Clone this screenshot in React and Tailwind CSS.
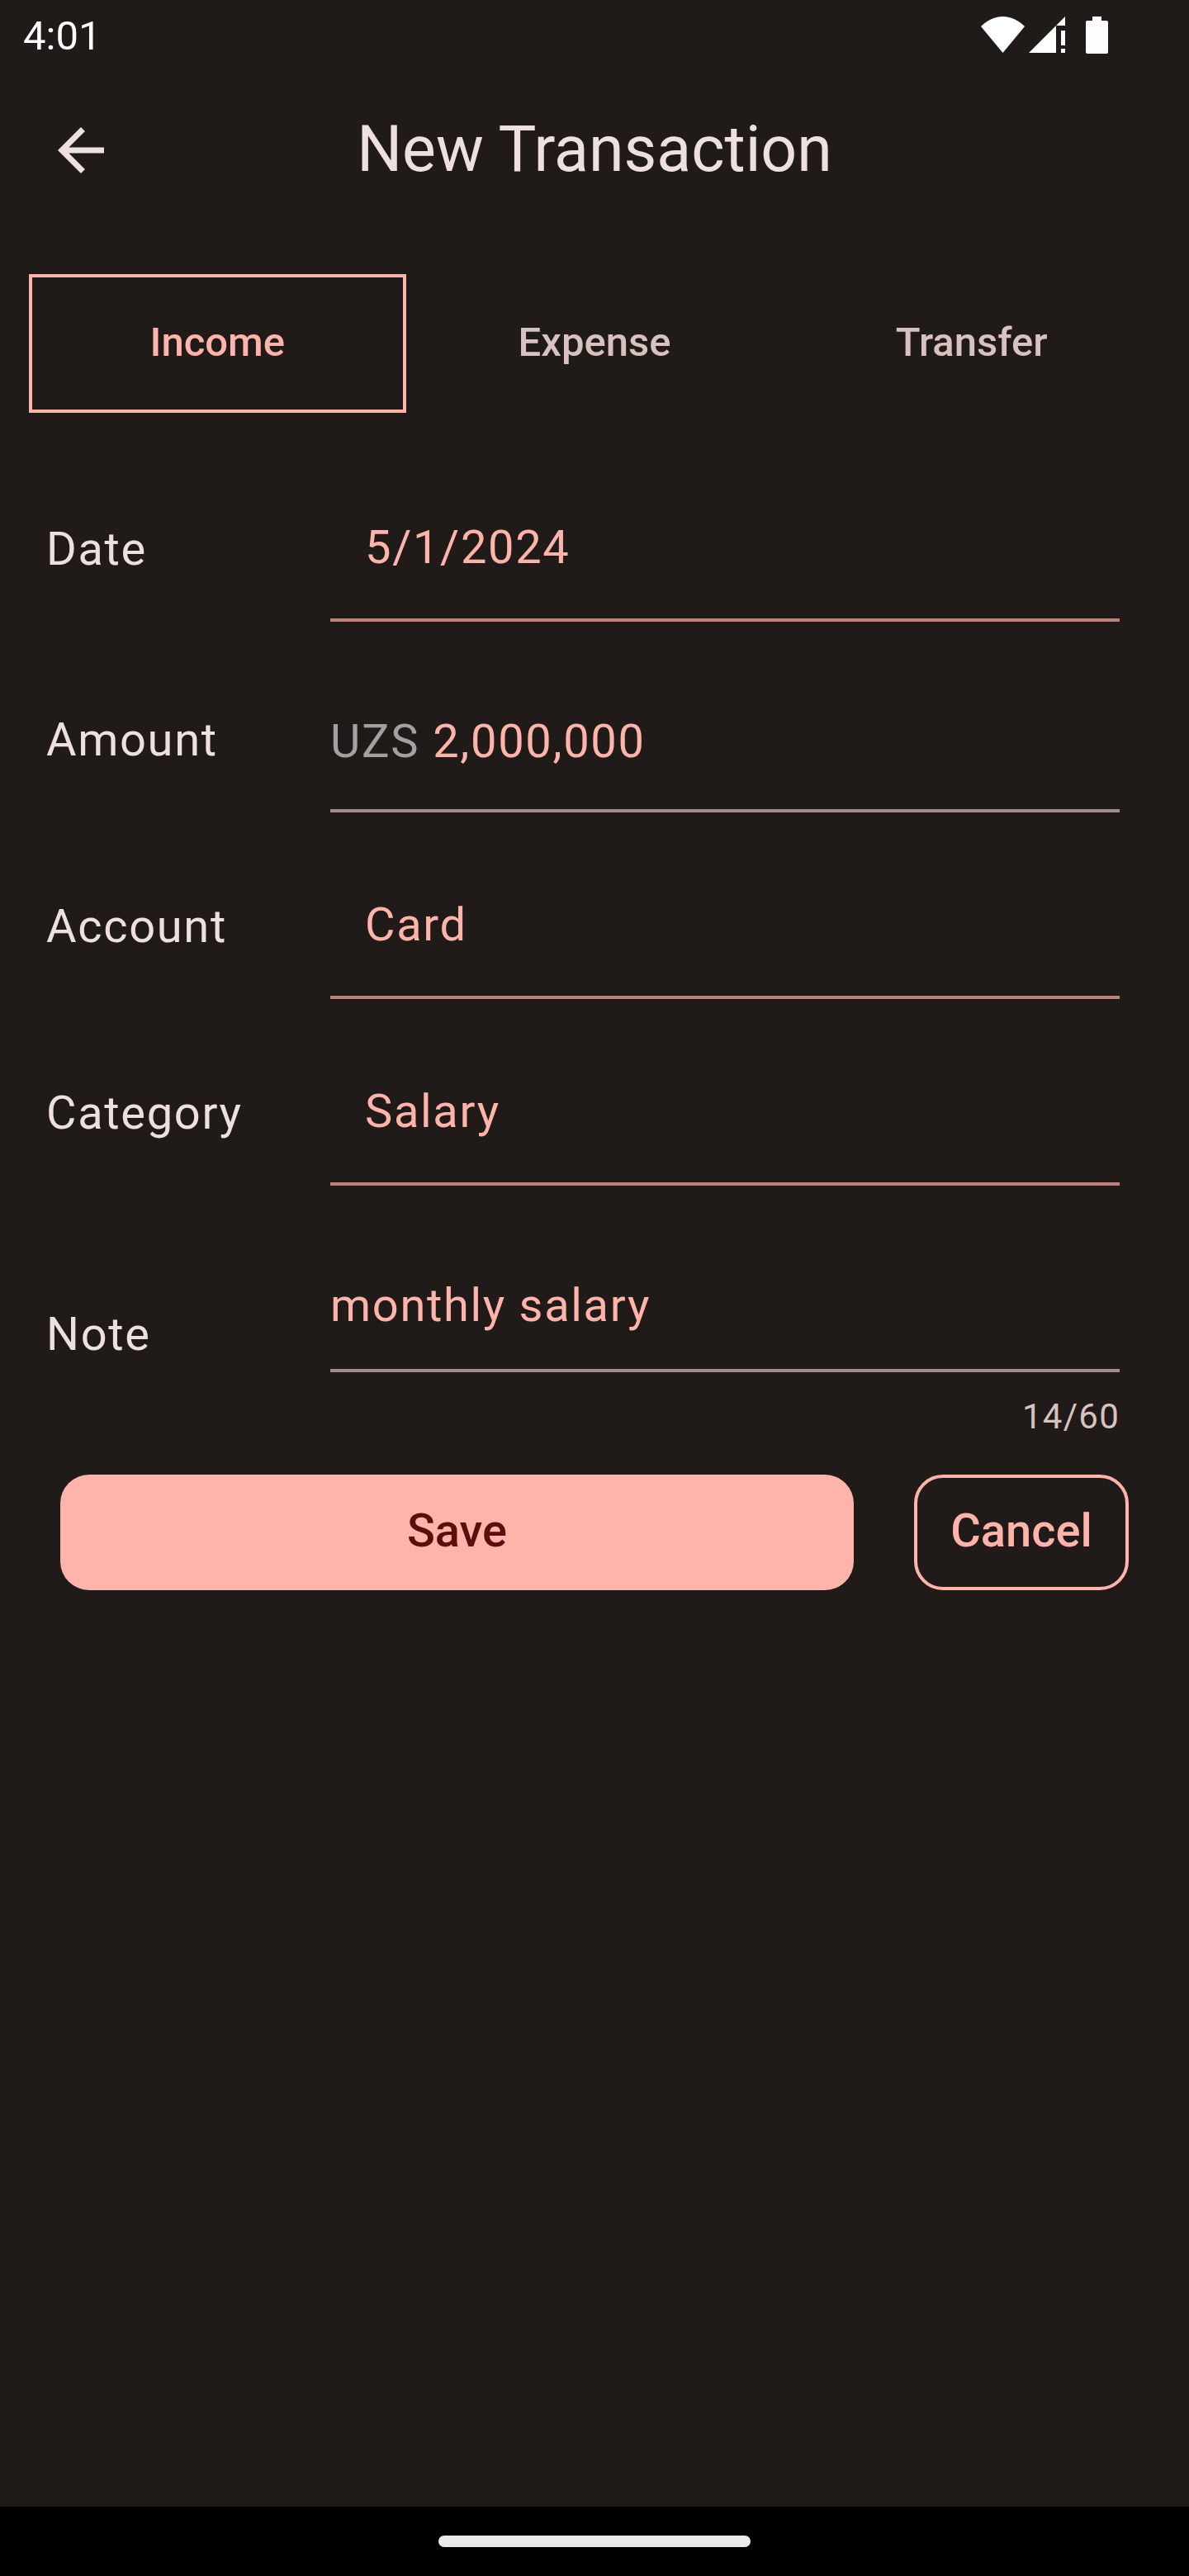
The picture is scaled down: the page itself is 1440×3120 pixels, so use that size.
import { useState } from "react";

function WifiIcon() {
  return (
    <svg className="h-11 w-[53px]" viewBox="0 0 53 44" fill="#fff" aria-hidden="true">
      <path d="M26.500 44L0 12C7 5 16 0 26.500 0S46 5 53 12Z" />
    </svg>
  );
}

function SignalIcon() {
  return (
    <svg className="h-11 w-11" viewBox="0 0 44 44" fill="#fff" aria-hidden="true">
      <path d="M0 44L44 0V11H33V44ZM39 17H44V35H39ZM39 39H44V44H39Z" />
    </svg>
  );
}

function BatteryIcon() {
  return (
    <svg className="h-[45px] w-[27px]" viewBox="0 0 27 45" fill="#fff" aria-hidden="true">
      <path d="M8 0H19V5H25Q27 5 27 7V43Q27 45 25 45H2Q0 45 0 43V7Q0 5 2 5H8Z" />
    </svg>
  );
}

function BackIcon() {
  return (
    <svg className="size-[84px]" viewBox="0 0 24 24" fill="currentColor" aria-hidden="true">
      <path d="M20 11H7.830l5.590-5.590L12 4l-8 8 8 8 1.410-1.410L7.830 13H20v-2z" />
    </svg>
  );
}

const labelClass = "w-[344px] shrink-0 pb-[46px] text-[56px] leading-[84px] tracking-[0.03em]";
const controlClass =
  "h-[84px] w-full min-w-0 appearance-none bg-transparent text-[56px] leading-[84px] tracking-[0.03em] text-[#ffb4ab] outline-none";

function Row({ id, label, children }) {
  return (
    <div className="flex h-[226px] items-end">
      <label htmlFor={id} className={labelClass}>
        {label}
      </label>
      <div className="min-w-0 flex-1 border-b-4 border-[#ba827d] pb-11">{children}</div>
    </div>
  );
}

const tabs = ["Income", "Expense", "Transfer"];

export default function App() {
  const [tab, setTab] = useState("Income");
  const [date, setDate] = useState("5/1/2024");
  const [amount, setAmount] = useState("2,000,000");
  const [note, setNote] = useState("monthly salary");

  return (
    <div className="flex min-h-screen flex-col bg-[#201a18] font-[Roboto,sans-serif] text-[#ede0de]">
      <div className="flex h-[88px] items-center justify-between pr-[98px] pl-7">
        <span className="text-[49px] leading-[56px] text-white">4:01</span>
        <div className="flex items-center pb-1">
          <WifiIcon />
          <span className="w-[5px]" />
          <SignalIcon />
          <span className="w-[25px]" />
          <BatteryIcon />
        </div>
      </div>

      <header className="grid h-[188px] grid-cols-[84px_1fr_84px] items-center px-14">
        <button type="button" aria-label="Back">
          <BackIcon />
        </button>
        <h1 className="pb-0.5 text-center text-[77px] leading-[98px]">New Transaction</h1>
      </header>

      <div role="tablist" className="mt-14 grid grid-cols-3 px-[35px]">
        {tabs.map((name) => (
          <button
            key={name}
            type="button"
            role="tab"
            aria-selected={tab === name}
            onClick={() => setTab(name)}
            className={
              tab === name
                ? "h-[168px] border-4 border-[#ffb4ab] pb-0.5 text-[49px] leading-[70px] font-medium text-[#ffb4ab]"
                : "h-[168px] border-4 border-transparent pb-0.5 text-[49px] leading-[70px] font-medium text-[#d8c2bf]"
            }
          >
            {name}
          </button>
        ))}
      </div>

      <form className="mt-[27px]" onSubmit={(e) => e.preventDefault()}>
        <div className="pr-[84px] pl-14">
          <Row id="date" label="Date">
            <input
              id="date"
              value={date}
              onChange={(e) => setDate(e.target.value)}
              className={controlClass + " px-[42px]"}
            />
          </Row>

          <div className="flex h-[231px] items-end">
            <label htmlFor="amount" className={labelClass}>
              Amount
            </label>
            <div className="flex min-w-0 flex-1 gap-4 border-b-4 border-[#a08c8a] pb-10">
              <span className="text-[56px] leading-[84px] tracking-[0.03em] text-[#a2a19f]">UZS</span>
              <input
                id="amount"
                value={amount}
                onChange={(e) => setAmount(e.target.value)}
                className={controlClass}
              />
            </div>
          </div>

          <Row id="account" label="Account">
            <select id="account" className={controlClass + " px-[42px]"}>
              <option>Card</option>
            </select>
          </Row>
          <Row id="category" label="Category">
            <select id="category" className={controlClass + " px-[42px]"}>
              <option>Salary</option>
            </select>
          </Row>

          <div className="flex items-end">
            <label
              htmlFor="note"
              className="w-[344px] shrink-0 pb-[86px] text-[56px] leading-[84px] tracking-[0.03em]"
            >
              Note
            </label>
            <div className="min-w-0 flex-1">
              <div className="flex h-[226px] items-end border-b-4 border-[#a08c8a] pb-[35px]">
                <input
                  id="note"
                  maxLength={60}
                  value={note}
                  onChange={(e) => setNote(e.target.value)}
                  className={controlClass}
                />
              </div>
              <p className="pt-[26px] text-right text-[42px] leading-[56px] tracking-[0.03em] text-[#d8c2bf]">
                {note.length}/60
              </p>
            </div>
          </div>
        </div>

        <div className="mt-[42px] flex gap-[73px] px-[73px]">
          <button
            type="submit"
            className="h-[140px] flex-1 rounded-[35px] bg-[#ffb4ab] pb-1 text-[56px] leading-[84px] font-medium text-[#5f0c0d]"
          >
            Save
          </button>
          <button
            type="button"
            className="h-[140px] w-[260px] rounded-[35px] border-4 border-[#ffb4ab] pb-1 text-[56px] leading-[84px] font-medium text-[#ffb4ab]"
          >
            Cancel
          </button>
        </div>
      </form>

      <div className="mt-auto flex h-[84px] items-center justify-center bg-black">
        <div className="h-3.5 w-[378px] rounded-full bg-[#ebebeb]" />
      </div>
    </div>
  );
}
